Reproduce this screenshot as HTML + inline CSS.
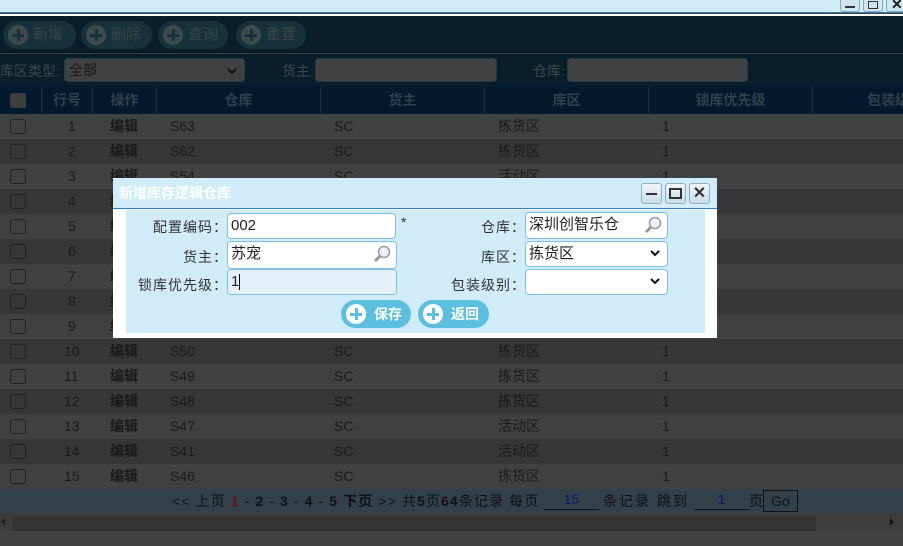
<!DOCTYPE html>
<html><head><meta charset="utf-8"><style>
*{margin:0;padding:0;box-sizing:border-box}
body{width:903px;height:546px;overflow:hidden;position:relative;background:#424242;font-family:"Liberation Sans","Noto Sans CJK SC",sans-serif;font-size:14px;color:#1a1a1a}
.abs{position:absolute}
.top{left:0;top:0;width:903px;height:13px;background:#d0ecf8;border-bottom:1px solid #2f7fc7}
.wb{top:-4px;width:20px;height:16px;border:1px solid #8aa;border-radius:3px;background:#cfe6f0}
.tool{left:0;top:16px;width:903px;height:37px;background:#0a1d2b;border-bottom:1px solid #06141f}
.tb{top:5px;height:28px;border-radius:14px;background:#16323a;color:#3a4646;font-size:15px;line-height:28px;padding-left:30px}
.tb i{position:absolute;left:5px;top:4px;width:20px;height:20px;border-radius:50%;background:#3f4b4b}
.tb i:before{content:"";position:absolute;left:4px;top:8.5px;width:12px;height:3px;background:#16323a}
.tb i:after{content:"";position:absolute;left:8.5px;top:4px;width:3px;height:12px;background:#16323a}
.filt{left:0;top:54px;width:903px;height:32px;background:#0a1d2b;color:#3e4a4a;font-size:14px}
.inp{top:4px;height:24px;background:#404142;border-radius:4px;border:1px solid #2a3a44}
.hdr{left:0;top:86px;width:903px;height:28px;background:#03192f;color:#32414e;font-weight:bold;font-size:14px}
.hdr span{position:absolute;top:0;height:28px;line-height:28px;text-align:center;border-right:1px solid #123048;white-space:nowrap;overflow:hidden}
.row{left:0;width:903px;height:25px;line-height:25px}
.row span{position:absolute;top:0}
.cb{left:10px;top:5px!important;width:16px;height:15px;border:1px solid #222;border-radius:3px}
.pager{left:0;top:489px;width:903px;height:24px;background:#34414a;font-size:14px;line-height:24px;color:#111}
.scroll{left:0;top:513px;width:903px;height:18px;background:#3c3c3c}
.dlg{left:113px;top:178px;width:604px;height:160px;background:#fff}
.dt{left:0;top:0;width:604px;height:31px;background:#d0ecf8;border-bottom:1px solid #2f7fc7;color:#fff;font-weight:bold;font-size:14px;line-height:31px;padding-left:6px}
.db{top:5px;width:21px;height:21px;border:1px solid #9ab;border-radius:3px;background:linear-gradient(#eef7fb,#c8dde6)}
.pan{left:13px;top:32px;width:579px;height:123px;background:#d0ecf8}
.lb{font-size:14px;color:#333;text-align:right;letter-spacing:1px}
.fi{height:26px;border:1px solid #7ec0e6;border-radius:4px;background:#fff;font-size:15px;line-height:24px;padding-left:3px;color:#222}
.btn{top:122px;height:28px;border-radius:14px;background:#5bbfe0;color:#fff;font-weight:bold;font-size:14px;line-height:28px;padding-left:33px}
.btn i{position:absolute;left:5px;top:4px;width:20px;height:20px;border-radius:50%;background:#fff}
.btn i:before{content:"";position:absolute;left:4px;top:8.5px;width:12px;height:3px;background:#5bbfe0}
.btn i:after{content:"";position:absolute;left:8.5px;top:4px;width:3px;height:12px;background:#5bbfe0}
.mag{position:absolute;right:5px;top:3px;width:18px;height:18px}
.chev{position:absolute;right:6px;top:5px;width:12px;height:12px}
</style></head><body>
<div class="abs top"></div>
<div class="abs wb" style="left:840px"><div style="position:absolute;left:4px;top:9px;width:10px;height:2px;background:#333"></div></div>
<div class="abs wb" style="left:863px"><div style="position:absolute;left:4px;top:4px;width:10px;height:8px;border:1.5px solid #333"></div></div>
<div class="abs wb" style="left:886px;font-size:14px;line-height:14px;padding-left:4px;font-weight:bold">✕</div>
<div class="abs" style="left:0;top:14px;width:903px;height:2px;background:#fff"></div>
<div class="abs tool">
<div class="abs tb" style="left:3px;width:73px"><i></i>新增</div>
<div class="abs tb" style="left:81px;width:71px"><i></i>删除</div>
<div class="abs tb" style="left:158px;width:70px"><i></i>查询</div>
<div class="abs tb" style="left:236px;width:70px"><i></i>重置</div>
</div>
<div class="abs filt">
<span class="abs" style="left:0;top:7px">库区类型:</span>
<div class="abs inp" style="left:64px;width:181px;color:#1a1a1a;padding-left:4px;line-height:22px">全部<svg class="chev" style="top:6px" viewBox="0 0 12 12"><path d="M2 4l4 4 4-4" stroke="#111" stroke-width="2" fill="none"/></svg></div>
<span class="abs" style="left:282px;top:7px">货主:</span>
<div class="abs inp" style="left:315px;width:182px"></div>
<span class="abs" style="left:533px;top:7px">仓库:</span>
<div class="abs inp" style="left:567px;width:181px"></div>
</div>
<div class="abs hdr">
<span style="left:0;width:42px"><b style="position:absolute;left:10px;top:7px;width:16px;height:15px;background:#3d3d3d;border-radius:2px"></b></span>
<span style="left:42px;width:51px">行号</span>
<span style="left:93px;width:64px">操作</span>
<span style="left:157px;width:164px">仓库</span>
<span style="left:321px;width:164px">货主</span>
<span style="left:485px;width:164px">库区</span>
<span style="left:649px;width:164px">锁库优先级</span>
<span style="left:813px;width:164px;border:none">包装级别</span>
</div>
<div id="rows"></div>
<script>
var d=[["S63","拣货区"],["S62","拣货区"],["S54","活动区"],["S53","拣货区"],["S52","拣货区"],["S51","拣货区"],["S57","拣货区"],["S56","拣货区"],["S55","拣货区"],["S50","拣货区"],["S49","拣货区"],["S48","拣货区"],["S47","活动区"],["S41","活动区"],["S46","拣货区"]];
var h="";for(var i=0;i<15;i++){h+='<div class="abs row" style="top:'+(114+i*25)+'px;background:'+(i%2?'#363738':'#404143')+'"><span class="cb"></span><span style="left:'+(i<9?68:64)+'px">'+(i+1)+'</span><span style="left:110px;font-weight:bold">编辑</span><span style="left:170px">'+d[i][0]+'</span><span style="left:334px">SC</span><span style="left:498px">'+d[i][1]+'</span><span style="left:662px">1</span></div>';}
document.getElementById("rows").innerHTML=h;
</script>
<div class="abs pager"><span class="abs" style="left:172px;letter-spacing:1.1px;white-space:nowrap">&lt;&lt; 上页 <b style="color:#6a0f0f">1</b> - <b>2</b> - <b>3</b> - <b>4</b> - <b>5</b> <b>下页</b> &gt;&gt; 共<b>5</b>页<b>64</b>条记录 每页</span>
<span class="abs" style="left:544px;width:55px;border-bottom:1px solid #111;text-align:center;color:#0a1a6a;line-height:20px">15</span>
<span class="abs" style="left:603px;letter-spacing:2px">条记录 跳到</span>
<span class="abs" style="left:694px;width:55px;border-bottom:1px solid #111;text-align:center;color:#0a1a6a;line-height:20px">1</span>
<span class="abs" style="left:749px">页</span>
<span class="abs" style="left:763px;top:1px;width:35px;height:22px;border:1px solid #111;line-height:20px;text-align:center">Go</span></div>
<div class="abs scroll"><div class="abs" style="left:13px;top:3px;width:803px;height:15px;background:#333"></div>
<div class="abs" style="left:1px;top:5px;border-right:4px solid #222;border-top:4px solid transparent;border-bottom:4px solid transparent"></div>
<div class="abs" style="left:890px;top:5px;border-left:4px solid #111;border-top:4px solid transparent;border-bottom:4px solid transparent"></div></div>
<div class="abs dlg">
<div class="abs dt">新增库存逻辑仓库</div>
<div class="abs db" style="left:528px"><div style="position:absolute;left:4px;top:9px;width:11px;height:2px;background:#333"></div></div>
<div class="abs db" style="left:552px"><div style="position:absolute;left:3px;top:4px;width:13px;height:11px;border:2px solid #333"></div></div>
<div class="abs db" style="left:576px;font-size:16px;line-height:19px;text-align:center;font-weight:bold;color:#333">✕</div>
<div class="abs pan">
<span class="abs lb" style="left:0;width:102px;top:7px">配置编码：</span>
<div class="abs fi" style="left:101px;top:3px;width:169px">002</div>
<span class="abs" style="left:275px;top:4px;color:#333">*</span>
<span class="abs lb" style="left:290px;width:110px;top:7px">仓库：</span>
<div class="abs fi" style="left:399px;top:2px;width:143px;height:27px">深圳创智乐仓<svg class="mag" viewBox="0 0 18 18"><circle cx="11" cy="7" r="5.5" fill="#eef" stroke="#999" stroke-width="1.5"/><path d="M7 11L2 16" stroke="#999" stroke-width="3"/></svg></div>
<span class="abs lb" style="left:0;width:102px;top:37px">货主：</span>
<div class="abs fi" style="left:101px;top:31px;width:170px;height:28px">苏宠<svg class="mag" viewBox="0 0 18 18"><circle cx="11" cy="7" r="5.5" fill="#eef" stroke="#999" stroke-width="1.5"/><path d="M7 11L2 16" stroke="#999" stroke-width="3"/></svg></div>
<span class="abs lb" style="left:290px;width:110px;top:37px">库区：</span>
<div class="abs fi" style="left:399px;top:31px;width:143px">拣货区<svg class="chev" viewBox="0 0 12 12"><path d="M2 4l4 4 4-4" stroke="#111" stroke-width="2" fill="none"/></svg></div>
<span class="abs lb" style="left:0;width:102px;top:65px">锁库优先级：</span>
<div class="abs fi" style="left:101px;top:59px;width:170px;background:#e6f0fb">1<span style="display:inline-block;width:1px;height:16px;background:#000;vertical-align:middle"></span></div>
<span class="abs lb" style="left:290px;width:110px;top:65px">包装级别：</span>
<div class="abs fi" style="left:399px;top:59px;width:143px"><svg class="chev" viewBox="0 0 12 12"><path d="M2 4l4 4 4-4" stroke="#111" stroke-width="2" fill="none"/></svg></div>
</div>
<div class="abs btn" style="left:228px;width:70px"><i></i>保存</div>
<div class="abs btn" style="left:305px;width:71px"><i></i>返回</div>
</div>
</body></html>
